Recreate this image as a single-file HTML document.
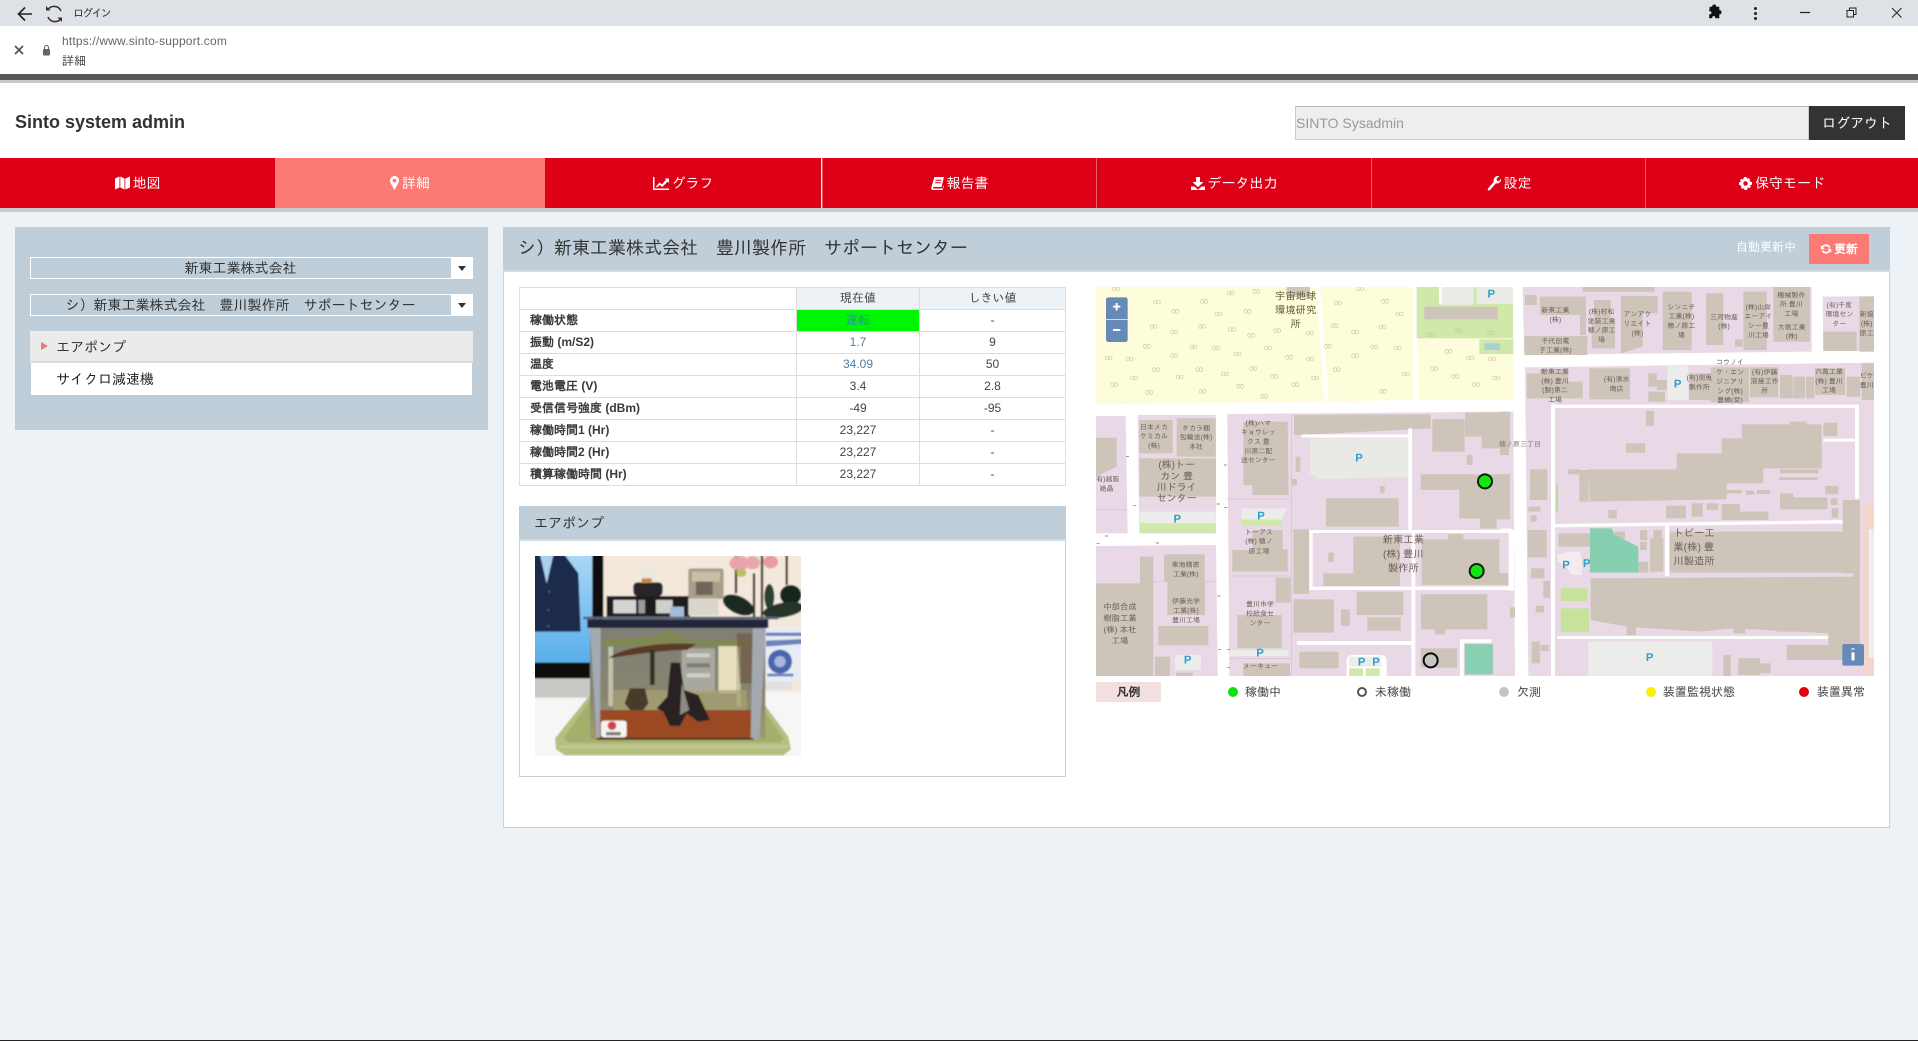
<!DOCTYPE html>
<html lang="ja"><head><meta charset="utf-8"><title>詳細</title>
<style>
html,body{margin:0;padding:0;width:1918px;height:1041px;overflow:hidden;background:#ecf2f6}
body{position:relative;font-family:"Liberation Sans","IPAGothic","Noto Sans CJK JP",sans-serif;color:#333;font-size:14px}
.a{position:absolute;box-sizing:border-box}
.nav{position:absolute;top:158px;height:50px;display:flex;align-items:center;justify-content:center;color:#fff;font-size:14px;gap:3px;background:#dd0016;border-left:1px solid #ea5a66;box-sizing:border-box;white-space:nowrap}
.nav svg{display:block}
.sel{position:absolute;box-sizing:border-box;left:30px;width:443px;height:22px;border:1px solid #fff;background:#bfced8;text-align:center;line-height:20px;padding-right:22px;color:#333;white-space:nowrap}
.sel:after{content:"";position:absolute;right:0;top:0;width:21px;height:20px;background:#fff}
.sel i{position:absolute;z-index:2;right:6px;top:8px;width:0;height:0;border-left:4px solid transparent;border-right:4px solid transparent;border-top:5px solid #333}
table{position:absolute;left:519px;top:287px;width:546px;height:199px;border-collapse:collapse;table-layout:fixed;font-size:12px;background:#fff}
td,th{border:1px solid #ddd;height:19px;padding:0 0 2px;text-align:center;font-weight:normal;color:#444;line-height:14px}
th{background:#ecf2f6}
td.l{text-align:left;padding-left:10px;font-weight:bold;color:#3a3a3a}
.leg{position:absolute;top:685px;font-size:12px;line-height:14px;color:#444;white-space:nowrap}
.dot{position:absolute;top:687px;width:10px;height:10px;border-radius:50%}
svg text{font-family:"Liberation Sans","IPAGothic","Noto Sans CJK JP",sans-serif}
</style></head><body>

<!-- browser chrome -->
<div class="a" style="left:0;top:0;width:1918px;height:26px;background:#dee1e6"></div>
<div class="a" style="left:0;top:26px;width:1918px;height:48px;background:#fff"></div>
<div class="a" style="left:0;top:74px;width:1918px;height:6px;background:#5a5857"></div>
<div class="a" style="left:0;top:80px;width:1918px;height:3px;background:#c9c9c9"></div>
<svg class="a" style="left:0;top:0" width="130" height="70" viewBox="0 0 130 70" fill="none">
<path d="M32 14H19M25 7.500L18.500 14L25 20.500" stroke="#222" stroke-width="1.600"/>
<path d="M61 11a7.500 7.500 0 0 0-13-1.500M48 17a7.500 7.500 0 0 0 13 1.500" stroke="#333" stroke-width="1.600"/>
<path d="M46 6v4.500h4.500zM62 22v-4.500h-4.500z" fill="#333"/>
<path d="M15 46l8 8M23 46l-8 8" stroke="#555" stroke-width="1.800"/>
<rect x="43" y="49" width="7" height="6.500" rx="1" fill="#666"/>
<path d="M44.500 49v-1.500a2 2 0 0 1 4 0V49" stroke="#666" stroke-width="1.100"/>
</svg>
<div class="a" style="left:73px;top:8px;font-size:11px;line-height:12px;color:#333;letter-spacing:-1.800px">ログイン</div>
<div class="a" style="left:62px;top:34px;font-size:12px;line-height:14px;color:#666;letter-spacing:.17px">https://www.sinto-support.com</div>
<div class="a" style="left:62px;top:54px;font-size:12px;line-height:14px;color:#444">詳細</div>
<svg class="a" style="left:1700px;top:0" width="218" height="26" viewBox="1700 0 218 26" fill="none">
<path d="M1711 8h2.500c-.5-3 4-3 3.500 0h3v3.500c3-.5 3 4 0 3.500v4h-3.500c.5-3-4-3-3.500 0h-2.500v-3.500c3 .5 3-4 0-3.500z" fill="#111" stroke="#111" stroke-width=".6" transform="translate(-1 -1)"/>
<circle cx="1755.500" cy="8.500" r="1.500" fill="#222"/><circle cx="1755.500" cy="13.500" r="1.500" fill="#222"/><circle cx="1755.500" cy="18.500" r="1.500" fill="#222"/>
<path d="M1800 12.500h10" stroke="#222" stroke-width="1.200"/>
<path d="M1847 10.500h6.500v6.500h-6.500zM1849.500 10.500v-2.500h6.500v6.500h-2.500" stroke="#222" stroke-width="1"/>
<path d="M1892 8l9.500 9.500M1901.500 8l-9.500 9.500" stroke="#222" stroke-width="1"/>
</svg>

<!-- page header -->
<div class="a" style="left:0;top:83px;width:1918px;height:75px;background:#fff"></div>
<div class="a" style="left:15px;top:112px;font-size:18px;line-height:21px;font-weight:bold;color:#333;white-space:nowrap">Sinto system admin</div>
<div class="a" style="left:1295px;top:106px;width:514px;height:34px;background:#eee;border:1px solid #ccc;border-top-color:#bbb;font-size:14px;line-height:32px;color:#999">SINTO Sysadmin</div>
<div class="a" style="left:1809px;top:106px;width:96px;height:34px;background:#333;color:#fff;font-size:14px;line-height:34px;text-align:center">ログアウト</div>

<!-- nav -->
<div class="a" style="left:0;top:208px;width:1918px;height:4px;background:#c9c9c9"></div>
<div class="nav" style="left:0;width:275px;border-left:0">
<svg width="15" height="14" viewBox="0 0 15 14"><path d="M0 2.500L4.500 .5V11.500L0 13.500zM5.300 .5L9.500 2.500V13.500L5.300 11.500zM10.300 2.500L15 .5V11.500L10.300 13.500z" fill="#fff"/></svg>地図</div>
<div class="nav" style="left:275px;width:270px;background:#fb7b74;border-left:0;color:#fff">
<svg width="9" height="14" viewBox="0 0 9 14"><path fill-rule="evenodd" d="M4.500 0a4.500 4.500 0 0 1 4.500 4.500c0 2.300-3 6.500-4.500 9.500C3 11 0 6.800 0 4.500A4.500 4.500 0 0 1 4.500 0zM4.500 2.700a1.900 1.900 0 1 0 0 3.800a1.900 1.900 0 0 0 0-3.800z" fill="#fff"/></svg>詳細</div>
<div class="nav" style="left:545px;width:276px;border-left:0">
<svg width="16" height="13" viewBox="0 0 16 13"><path d="M0 0h1.500v11.500H16V13H0zM3 9.500L6.500 5.500L9 7.500L13 2.500L11.500 1.500H16V6L14.800 4.500L9.300 10L6.700 8L4 10.500z" fill="#fff"/></svg>グラフ</div>
<div class="nav" style="left:822px;width:274px">
<svg width="13" height="13" viewBox="0 0 13 13"><path fill-rule="evenodd" d="M3.500 0H13L10.500 10H2.800C1.800 10 1.800 11.500 2.800 11.500H11.500L12.500 8.500L13 9L11.500 13H2C.5 13 0 11.500 .4 10zM4.500 2.800L4.300 3.800H10.300L10.500 2.800zM4 5.200L3.800 6.200H9.800L10 5.200z" fill="#fff"/></svg>報告書</div>
<div class="nav" style="left:1096px;width:275px">
<svg width="14" height="13" viewBox="0 0 14 13"><path d="M5 0H9V5H12.500L7 10.200L1.500 5H5zM0 9.500H3.500L7 12.800L10.500 9.500H14V13H0z" fill="#fff"/></svg>データ出力</div>
<div class="nav" style="left:1371px;width:275px">
<svg width="14" height="15" viewBox="0 0 14 15"><path d="M14 3.500C14 6.500 11.500 8 9 7.300L2.800 14.200C1.800 15.300 0 13.800 1 12.500L6.800 5.800C6 3 8 0 11 0C11.500 0 12 .1 12.300 .3L9.500 2.800L10 4.800L12 5.300L13.800 2.500C13.900 2.800 14 3.100 14 3.500z" fill="#fff"/></svg>設定</div>
<div class="nav" style="left:1645px;width:273px">
<svg width="13" height="13" viewBox="0 0 14 14"><path fill-rule="evenodd" d="M5.800 0H8.200L8.600 1.900L10.300 1.200L12 2.700L11.200 4.400L13 5L14 5.800V8.200L12.100 8.600L12.800 10.300L11.300 12L9.600 11.200L9 13L8.200 14H5.800L5.400 12.100L3.700 12.800L2 11.300L2.800 9.600L1 9L0 8.200V5.800L1.900 5.400L1.200 3.700L2.700 2L4.400 2.800L5 1zM7 4.600a2.400 2.400 0 1 0 0 4.800a2.400 2.400 0 0 0 0-4.800z" fill="#fff"/></svg>保守モード</div>

<!-- left panel -->
<div class="a" style="left:15px;top:227px;width:473px;height:203px;background:#bfced8"></div>
<div class="sel" style="top:257px">新東工業株式会社<i></i></div>
<div class="sel" style="top:294px">シ）新東工業株式会社　豊川製作所　サポートセンター<i></i></div>
<div class="a" style="left:30px;top:331px;width:443px;height:32px;background:#ebebeb;border-bottom:2px solid #dcdcdc;line-height:32px;padding-left:26px;color:#333">エアポンプ</div>
<div class="a" style="left:41px;top:342px;width:0;height:0;border-left:7px solid #e77b78;border-top:4px solid transparent;border-bottom:4px solid transparent"></div>
<div class="a" style="left:31px;top:363px;width:441px;height:32px;background:#fff;line-height:32px;padding-left:25px;color:#222">サイクロ減速機</div>

<!-- right panel -->
<div class="a" style="left:503px;top:227px;width:1387px;height:601px;background:#fff;border:1px solid #c6d2db"></div>
<div class="a" style="left:503px;top:227px;width:1387px;height:43px;background:#bfced8;border-bottom:0"></div>
<div class="a" style="left:503px;top:270px;width:1387px;height:2px;background:#d3dde4"></div>
<div class="a" style="left:518px;top:237px;font-size:18px;line-height:22px;color:#333;white-space:nowrap">シ）新東工業株式会社　豊川製作所　サポートセンター</div>
<div class="a" style="left:1736px;top:240px;font-size:12px;line-height:14px;color:#fff;white-space:nowrap">自動更新中</div>
<div class="a" style="left:1809px;top:234px;width:60px;height:30px;background:#fb7b74;color:#fff;font-size:12px;line-height:30px;padding-left:25px;font-weight:bold">更新</div>
<svg class="a" style="left:1820px;top:243px" width="12" height="12" viewBox="0 0 12 12"><path d="M10.500 4.500A4.800 4.800 0 0 0 2 3.500L.8 2.300V6.200H4.700L3.300 4.800A3 3 0 0 1 8.500 4.500zM1.500 7.500A4.800 4.800 0 0 0 10 8.500L11.200 9.700V5.800H7.300L8.700 7.200A3 3 0 0 1 3.500 7.500z" fill="#fff"/></svg>

<table>
<colgroup><col style="width:277px"><col style="width:123px"><col style="width:146px"></colgroup>
<tr><td style="background:#fff"></td><th>現在値</th><th>しきい値</th></tr>
<tr><td class="l">稼働状態</td><td style="background:#00f500;color:#1f9a9a;border:1px solid #ddd">運転</td><td>-</td></tr>
<tr><td class="l">振動 (m/S2)</td><td style="color:#4d7ea8">1.7</td><td>9</td></tr>
<tr><td class="l">温度</td><td style="color:#4d7ea8">34.09</td><td>50</td></tr>
<tr><td class="l">電池電圧 (V)</td><td>3.4</td><td>2.8</td></tr>
<tr><td class="l">受信信号強度 (dBm)</td><td>-49</td><td>-95</td></tr>
<tr><td class="l">稼働時間1 (Hr)</td><td>23,227</td><td>-</td></tr>
<tr><td class="l">稼働時間2 (Hr)</td><td>23,227</td><td>-</td></tr>
<tr><td class="l">積算稼働時間 (Hr)</td><td>23,227</td><td>-</td></tr>
</table>

<!-- air pump panel -->
<div class="a" style="left:519px;top:506px;width:547px;height:271px;background:#fff;border:1px solid #c6d2db"></div>
<div class="a" style="left:519px;top:506px;width:547px;height:33px;background:#bfced8;line-height:35px;padding-left:15px;color:#333">エアポンプ</div>
<div class="a" style="left:519px;top:539px;width:547px;height:2px;background:#d3dde4"></div>

<svg class="a" style="left:535px;top:556px" width="266" height="200" viewBox="535 556 266 200">
<defs>
<linearGradient id="sk" x1="0" y1="0" x2="0" y2="1"><stop offset="0" stop-color="#b4dcf6"/><stop offset="1" stop-color="#58aeea"/></linearGradient>
<linearGradient id="wt" x1="0" y1="0" x2="0" y2="1"><stop offset="0" stop-color="#7f7f76"/><stop offset=".6" stop-color="#87846f"/><stop offset="1" stop-color="#a29a6e"/></linearGradient>
<filter id="bl" x="-5%" y="-5%" width="110%" height="110%"><feGaussianBlur stdDeviation="2.400"/></filter>
<clipPath id="ic"><rect x="535" y="556" width="266" height="200"/></clipPath>
</defs>
<g clip-path="url(#ic)"><g transform="translate(530 550) scale(.33333)" filter="url(#bl)">
<rect x="-20" y="-20" width="880" height="680" fill="#f4e8dc"/>
<rect x="-20" y="425" width="880" height="230" fill="#f6f6f6"/>
<rect x="-20" y="-20" width="240" height="408" fill="#0e0e10"/>
<rect x="-20" y="-20" width="207" height="358" fill="url(#sk)"/>
<path d="M-20 -20H25L50 100L78 -20L145 70L152 245H-20z" fill="#1c2b4c"/>
<path d="M22 -20H78L50 100z" fill="#a9cfee"/>
<circle cx="55" cy="180" r="3" fill="#5a6a88"/><circle cx="55" cy="228" r="3" fill="#5a6a88"/><circle cx="58" cy="125" r="3" fill="#5a6a88"/>
<rect x="-20" y="385" width="220" height="58" fill="#c9c9c5"/>
<!-- tray -->
<path d="M185 428L75 565L78 598L105 616H760L783 598L775 560L690 445z" fill="#b5bf80"/>
<path d="M185 445L100 565L115 578H750L760 565L695 470z" fill="#a5af6c"/>
<path d="M85 590H775" stroke="#c4cc96" stroke-width="6"/>
<!-- rack + equipment -->
<rect x="230" y="138" width="250" height="62" fill="#1b1b1b"/>
<rect x="250" y="150" width="68" height="40" fill="#d5d5d2"/><rect x="378" y="150" width="50" height="40" fill="#cfcfcb"/><rect x="325" y="150" width="20" height="40" fill="#9a9a98"/>
<rect x="310" y="97" width="88" height="41" rx="12" fill="#27272c"/>
<rect x="333" y="60" width="40" height="30" fill="#e9e9e0"/><rect x="335" y="85" width="30" height="14" fill="#c98a3c"/>
<rect x="475" y="55" width="106" height="92" rx="8" fill="#a89e8a"/>
<rect x="486" y="65" width="84" height="30" fill="#c9bfa8"/><rect x="498" y="95" width="50" height="40" fill="#6d665a"/>
<rect x="475" y="145" width="90" height="50" fill="#dad6cc"/>
<rect x="420" y="170" width="42" height="36" fill="#a5bdd9"/>
<!-- plant -->
<path d="M618 -20V130M672 70V205M696 -20V205M770 -20V105" stroke="#3b3020" stroke-width="7" fill="none"/>
<ellipse cx="628" cy="40" rx="30" ry="22" fill="#e9a3ac"/><ellipse cx="668" cy="38" rx="22" ry="20" fill="#e7a9a8"/><ellipse cx="722" cy="36" rx="22" ry="19" fill="#e89aa5"/>
<ellipse cx="634" cy="68" rx="15" ry="13" fill="#b9c264"/>
<ellipse cx="625" cy="165" rx="50" ry="26" transform="rotate(25 625 165)" fill="#1f2c23"/>
<ellipse cx="782" cy="135" rx="32" ry="30" fill="#18281c"/><ellipse cx="718" cy="140" rx="15" ry="38" fill="#2a4030"/>
<ellipse cx="760" cy="180" rx="62" ry="22" transform="rotate(-10 760 180)" fill="#26352a"/>
<!-- vase -->
<path d="M700 232H860V350L785 395H712z" fill="#e8ecf4"/>
<path d="M708 248H860V258H708zM708 272L860 265V278L708 290z" fill="#6a84bc"/>
<circle cx="750" cy="335" r="36" fill="#4a66ac"/><circle cx="750" cy="335" r="17" fill="#a8b8dc"/>
<path d="M712 375H790" stroke="#6a84bc" stroke-width="8"/>
<rect x="696" y="395" width="90" height="25" rx="8" fill="#dfe0e2"/>
<!-- tank -->
<rect x="180" y="232" width="526" height="336" fill="url(#wt)"/>
<rect x="565" y="280" width="55" height="150" fill="#e6dfbe"/>
<rect x="455" y="295" width="100" height="135" fill="#a8a8a0"/>
<rect x="470" y="310" width="70" height="12" fill="#cfcfc8"/><rect x="470" y="340" width="70" height="12" fill="#7d7d78"/><rect x="470" y="370" width="70" height="12" fill="#cfcfc8"/>
<rect x="235" y="290" width="14" height="178" fill="#c4c2aa"/><rect x="620" y="290" width="12" height="180" fill="#c8c4a6"/>
<rect x="250" y="420" width="400" height="60" fill="#a6a272" opacity=".7"/>
<path d="M205 480H668V565H205z" fill="#9a4a24"/>
<path d="M195 270L360 262L420 240L490 270L680 272V288L195 290z" fill="#7f8852"/>
<path d="M235 325C270 295 380 275 500 282L470 300C400 300 300 315 235 325z" fill="#5b3a26"/>
<path d="M620 250H690V400H630z" fill="#6b4a38" opacity=".55"/>
<rect x="360" y="300" width="14" height="105" fill="#333028"/>
<path d="M284 460L300 415L345 415L355 460L340 480H300z" fill="#4a3a2a"/>
<path d="M380 475L412 440L422 338H450L462 420L505 435L540 510L505 515L470 490L450 528H420L400 485z" fill="#2b2420"/>
<path d="M455 400L478 480L450 495z" fill="#8d8b84"/>
<path d="M180 232H212L210 568H200z" fill="#a4aab2"/><path d="M668 235H708L688 568H662z" fill="#a4a9b0"/>
<rect x="172" y="208" width="543" height="26" fill="#24253a"/>
<rect x="160" y="200" width="585" height="8" fill="#5d6278"/>
<rect x="200" y="564" width="470" height="5" fill="#2a241e"/>
<!-- label -->
<rect x="213" y="512" width="77" height="50" rx="8" fill="#f6f4f0"/>
<circle cx="246" cy="527" r="13" fill="#cf4248"/>
<rect x="228" y="546" width="44" height="10" fill="#444" opacity=".7"/>
</g></g>
</svg>

<!-- map -->
<svg class="a" style="left:1096px;top:287px" width="778" height="389" viewBox="1096 287 778 389" text-rendering="geometricPrecision">
<rect x="1096" y="287" width="778" height="389" fill="#fff"/>

<!-- ZONE A -->
<g transform="translate(1090 280) scale(.33333)">
<g fill="#fefddb">
<path d="M18 21H680L703 365L18 373z"/><path d="M690 21H968L970 360L717 364z"/><path d="M982 175H1269L1270 358L985 360z"/>
</g>
<path d="M980 21H1269V175H980z" fill="#d0e9a9"/>
<path d="M1055 21V75H1150V21zM1160 21H1269V72H1160z" fill="#eaeae6"/><path d="M1047 21h8v50h-8z" fill="#fff"/>
<rect x="1003" y="80" width="220" height="38" fill="#cdc4ba"/>
<rect x="1168" y="178" width="102" height="44" fill="#d0e9a9"/><rect x="1183" y="190" width="47" height="20" fill="#a8cfd8"/>
<rect x="590" y="21" width="70" height="30" fill="#cdc4ba"/>
<path fill="none" stroke="#c3c596" stroke-width="1.700" d="M73 33a5 6 0 1 1 .1 0m11 0a5 6 0 1 1 .1 0M195 72a5 6 0 1 1 .1 0m11 0a5 6 0 1 1 .1 0M337 70a5 6 0 1 1 .1 0m11 0a5 6 0 1 1 .1 0M250 100a5 6 0 1 1 .1 0m11 0a5 6 0 1 1 .1 0M380 108a5 6 0 1 1 .1 0m11 0a5 6 0 1 1 .1 0M467 100a5 6 0 1 1 .1 0m11 0a5 6 0 1 1 .1 0M416 45a5 6 0 1 1 .1 0m11 0a5 6 0 1 1 .1 0M493 40a5 6 0 1 1 .1 0m11 0a5 6 0 1 1 .1 0M185 145a5 6 0 1 1 .1 0m11 0a5 6 0 1 1 .1 0M247 162a5 6 0 1 1 .1 0m11 0a5 6 0 1 1 .1 0M420 155a5 6 0 1 1 .1 0m11 0a5 6 0 1 1 .1 0M478 172a5 6 0 1 1 .1 0m11 0a5 6 0 1 1 .1 0M330 145a5 6 0 1 1 .1 0m11 0a5 6 0 1 1 .1 0M556 158a5 6 0 1 1 .1 0m11 0a5 6 0 1 1 .1 0M654 165a5 6 0 1 1 .1 0m11 0a5 6 0 1 1 .1 0M165 205a5 6 0 1 1 .1 0m11 0a5 6 0 1 1 .1 0M50 240a5 6 0 1 1 .1 0m11 0a5 6 0 1 1 .1 0M113 243a5 6 0 1 1 .1 0m11 0a5 6 0 1 1 .1 0M247 233a5 6 0 1 1 .1 0m11 0a5 6 0 1 1 .1 0M305 207a5 6 0 1 1 .1 0m11 0a5 6 0 1 1 .1 0M372 210a5 6 0 1 1 .1 0m11 0a5 6 0 1 1 .1 0M437 228a5 6 0 1 1 .1 0m11 0a5 6 0 1 1 .1 0M528 210a5 6 0 1 1 .1 0m11 0a5 6 0 1 1 .1 0M592 238a5 6 0 1 1 .1 0m11 0a5 6 0 1 1 .1 0M655 243a5 6 0 1 1 .1 0m11 0a5 6 0 1 1 .1 0M193 275a5 6 0 1 1 .1 0m11 0a5 6 0 1 1 .1 0M322 275a5 6 0 1 1 .1 0m11 0a5 6 0 1 1 .1 0M263 297a5 6 0 1 1 .1 0m11 0a5 6 0 1 1 .1 0M400 288a5 6 0 1 1 .1 0m11 0a5 6 0 1 1 .1 0M484 272a5 6 0 1 1 .1 0m11 0a5 6 0 1 1 .1 0M547 295a5 6 0 1 1 .1 0m11 0a5 6 0 1 1 .1 0M127 300a5 6 0 1 1 .1 0m11 0a5 6 0 1 1 .1 0M67 320a5 6 0 1 1 .1 0m11 0a5 6 0 1 1 .1 0M172 343a5 6 0 1 1 .1 0m11 0a5 6 0 1 1 .1 0M332 340a5 6 0 1 1 .1 0m11 0a5 6 0 1 1 .1 0M445 325a5 6 0 1 1 .1 0m11 0a5 6 0 1 1 .1 0M610 320a5 6 0 1 1 .1 0m11 0a5 6 0 1 1 .1 0M670 300a5 6 0 1 1 .1 0m11 0a5 6 0 1 1 .1 0M517 355a5 6 0 1 1 .1 0m11 0a5 6 0 1 1 .1 0M738 75a5 6 0 1 1 .1 0m11 0a5 6 0 1 1 .1 0M880 70a5 6 0 1 1 .1 0m11 0a5 6 0 1 1 .1 0M805 32a5 6 0 1 1 .1 0m11 0a5 6 0 1 1 .1 0M923 108a5 6 0 1 1 .1 0m11 0a5 6 0 1 1 .1 0M872 147a5 6 0 1 1 .1 0m11 0a5 6 0 1 1 .1 0M728 143a5 6 0 1 1 .1 0m11 0a5 6 0 1 1 .1 0M790 162a5 6 0 1 1 .1 0m11 0a5 6 0 1 1 .1 0M708 205a5 6 0 1 1 .1 0m11 0a5 6 0 1 1 .1 0M790 233a5 6 0 1 1 .1 0m11 0a5 6 0 1 1 .1 0M847 207a5 6 0 1 1 .1 0m11 0a5 6 0 1 1 .1 0M917 210a5 6 0 1 1 .1 0m11 0a5 6 0 1 1 .1 0M735 275a5 6 0 1 1 .1 0m11 0a5 6 0 1 1 .1 0M873 340a5 6 0 1 1 .1 0m11 0a5 6 0 1 1 .1 0M942 288a5 6 0 1 1 .1 0m11 0a5 6 0 1 1 .1 0M1070 220a5 6 0 1 1 .1 0m11 0a5 6 0 1 1 .1 0M1135 240a5 6 0 1 1 .1 0m11 0a5 6 0 1 1 .1 0M1200 243a5 6 0 1 1 .1 0m11 0a5 6 0 1 1 .1 0M1027 272a5 6 0 1 1 .1 0m11 0a5 6 0 1 1 .1 0M1090 295a5 6 0 1 1 .1 0m11 0a5 6 0 1 1 .1 0M1213 300a5 6 0 1 1 .1 0m11 0a5 6 0 1 1 .1 0M1153 320a5 6 0 1 1 .1 0m11 0a5 6 0 1 1 .1 0M1016 170a5 6 0 1 1 .1 0m11 0a5 6 0 1 1 .1 0M1100 158a5 6 0 1 1 .1 0m11 0a5 6 0 1 1 .1 0M1197 165a5 6 0 1 1 .1 0m11 0a5 6 0 1 1 .1 0"/>

<!-- pink land -->
<g fill="#e9d9e6">
<path d="M18 408H107L113 760H18z"/>
<path d="M143 405H378V760H148z"/>
<path d="M412 402L1270 395L1275 1188H418z"/>
<path d="M18 798L378 795L383 1188H18z"/>
</g>
<!-- buildings -->
<g fill="#cdc4ba">
<path d="M18 473H80V560L18 590z"/>
<rect x="148" y="420" width="100" height="100"/><rect x="260" y="415" width="117" height="115"/>
<path d="M148 535H378V650H148z"/>
<path d="M460 425H593L596 645H487V615H460z"/>
<path d="M612 405L1022 403V445L635 465H612z"/>
<rect x="1027" y="417" width="97" height="98"/>
<path d="M1125 397H1260V505H1175V470H1125z"/>
<rect x="1130" y="525" width="18" height="30"/><rect x="617" y="530" width="14" height="45"/><rect x="605" y="597" width="16" height="20"/><rect x="870" y="618" width="14" height="22"/>
<rect x="708" y="655" width="218" height="85"/>
<path d="M992 583H1260V718H1220V745H1170V715H1108V630H992z"/>
<path d="M487 750H578V808H593V875H427V810H487z"/>
<rect x="610" y="748" width="47" height="194"/>
<rect x="610" y="958" width="122" height="100"/><rect x="800" y="935" width="140" height="70"/><rect x="832" y="1012" width="100" height="40"/><rect x="753" y="988" width="26" height="50"/>
<path d="M993 943H1192V1048H1065V1063H1035V1048H993z"/>
<path d="M442 1005H575V1105H442z"/><rect x="557" y="893" width="45" height="75"/>
<rect x="460" y="1150" width="140" height="38"/><rect x="628" y="1115" width="118" height="50"/>
<rect x="992" y="1105" width="110" height="58"/>
<path d="M18 910H150V830H190V1188H18z"/>
<rect x="222" y="823" width="122" height="82"/><rect x="232" y="905" width="113" height="100"/>
<rect x="205" y="1038" width="150" height="58"/><rect x="195" y="1130" width="45" height="58"/><rect x="258" y="1178" width="50" height="10"/>
</g>
<!-- roads -->
<g fill="#fff">
<rect x="658" y="750" width="612" height="9"/><rect x="658" y="750" width="10" height="180"/><rect x="658" y="920" width="612" height="10"/>
<rect x="955" y="445" width="11" height="310"/><rect x="634" y="463" width="330" height="10" rx="5"/>
<rect x="964" y="755" width="12" height="433"/><rect x="620" y="1083" width="345" height="12" rx="5"/>
<rect x="1110" y="1078" width="95" height="10"/><rect x="1110" y="1078" width="11" height="110"/>
<rect x="1258" y="750" width="14" height="182"/>
</g>
<!-- inner buildings in framed block -->
<g fill="#cdc4ba">
<path d="M790 770H930V918H700V880H790z"/>
<path d="M995 778H1075V762H1120V778H1228V880H1252V915H995z"/>
</g>
<rect x="715" y="818" width="16" height="28" fill="#cdc4ba"/>
<!-- parking / green / water -->
<path d="M660 475H955V590L690 598L660 580z" fill="#e9e9e6"/>
<rect x="150" y="695" width="227" height="35" fill="#ececea"/><rect x="150" y="730" width="227" height="28" fill="#d0e9a9"/>
<path d="M455 685H590L575 718H455z" fill="#ececea"/><rect x="455" y="720" width="120" height="18" fill="#d0e9a9"/>
<rect x="420" y="1110" width="175" height="18" fill="#ececea"/>
<rect x="255" y="1125" width="78" height="45" fill="#ececea"/>
<path d="M770 1188V1140Q770 1125 790 1125H870Q890 1125 890 1140V1188z" fill="#fff"/>
<rect x="778" y="1130" width="94" height="30" fill="#ececea"/>
<rect x="777" y="1165" width="42" height="23" fill="#d0e9a9"/><rect x="827" y="1165" width="42" height="23" fill="#d0e9a9"/>
<rect x="1125" y="1093" width="83" height="90" fill="#89cfb2" stroke="#b0bdb0"/>
<path d="M412 657H605M604 403V1188M417 888H605M417 1135H600M18 688H110M190 905H380" stroke="#d2c0cd" stroke-width="2" fill="none"/>
<!-- P -->
<g font-size="34" font-weight="bold" fill="#2e9ecb" text-anchor="middle">
<text x="807" y="545">P</text><text x="262" y="727">P</text><text x="513" y="718">P</text><text x="510" y="1130">P</text><text x="293" y="1150">P</text><text x="815" y="1156">P</text><text x="858" y="1156">P</text><text x="1204" y="52">P</text>
</g>
<!-- labels -->
<g font-size="31" fill="#5e5a32" text-anchor="middle">
<text x="617" y="59">宇宙地球</text><text x="617" y="101">環境研究</text><text x="617" y="143">所</text>
</g>
<g font-size="31" fill="#6b5f57" text-anchor="middle">
<text x="940" y="789">新東工業</text><text x="940" y="833">(株) 豊川</text><text x="940" y="875">製作所</text>
</g>
<g font-size="30" fill="#6b5f57" text-anchor="middle">
<text x="260" y="564">(株)トー</text><text x="260" y="598">カン 豊</text><text x="260" y="631">川ドライ</text><text x="260" y="665">センター</text>
</g>
<g font-size="25" fill="#6b5f57" text-anchor="middle">
<text x="90" y="989">中部合成</text><text x="90" y="1023">樹脂工業</text><text x="90" y="1057">(株) 本社</text><text x="90" y="1090">工場</text>
</g>
<g font-size="21" fill="#6b5f57" text-anchor="middle">
<text x="192" y="449">日本メカ</text><text x="192" y="476">ケミカル</text><text x="192" y="504">(株)</text>
<text x="318" y="451">タカラ梱</text><text x="318" y="479">包輸送(株)</text><text x="318" y="507">本社</text>
<text x="505" y="436">(株)ハマ</text><text x="505" y="464">キョウレッ</text><text x="505" y="492">クス 豊</text><text x="505" y="520">川第二配</text><text x="505" y="547">送センター</text>
<text x="507" y="763">トーアス</text><text x="507" y="791">(株) 穂ノ</text><text x="507" y="820">原工場</text>
<text x="287" y="861">東海精密</text><text x="287" y="890">工業(株)</text>
<text x="288" y="971">伊藤光学</text><text x="288" y="999">工業(株)</text><text x="288" y="1027">豊川工場</text>
<text x="510" y="980">豊川市学</text><text x="510" y="1008">校給食セ</text><text x="510" y="1036">ンター</text>
<text x="512" y="1165">メーキュー</text>
<text x="50" y="604">(有)越阪</text><text x="50" y="633">絶晶</text>
</g>
<g stroke="#666" stroke-width="2" fill="none"><path d="M108 530h9M402 555h8M130 676h9M380 672h9M403 682h9M45 768h9M20 790h9M198 789h9M382 948h9M385 1108h8M412 1108h8M412 1163h8"/></g>
<!-- zoom control -->
<rect x="48" y="52" width="65" height="134" rx="7" fill="#6689b8"/>
<rect x="48" y="117" width="65" height="3" fill="#cfdbe8"/>
<path d="M69 80h22M80 69v22M69 150h22" stroke="#fff" stroke-width="6"/>
<!-- pins -->
<circle cx="1185" cy="604" r="21" fill="#14e614" stroke="#0c200c" stroke-width="6"/>
<circle cx="1160" cy="873" r="21" fill="#14e614" stroke="#0c200c" stroke-width="6"/>
<circle cx="1022" cy="1141" r="21" fill="#c6c6c6" stroke="#0a0a0a" stroke-width="6"/>
</g>

<!-- ZONE B -->
<g transform="translate(1500 280) scale(.33333)">
<g fill="#e9d9e6">
<path d="M68 21H935V215L73 225z"/>
<path d="M968 50L1122 48V213L970 213z"/>
<path d="M75 262L1122 248V1188H85z"/>
</g>
<g fill="#cdc4ba">
<rect x="75" y="45" width="35" height="30"/>
<path d="M120 50H258V165H240V105H120z"/>
<rect x="73" y="168" width="189" height="57"/>
<rect x="282" y="60" width="50" height="70"/><rect x="275" y="130" width="70" height="75"/>
<path d="M363 48H473V100H428V200L363 220z"/>
<rect x="488" y="35" width="87" height="175"/><rect x="618" y="40" width="52" height="155"/>
<rect x="730" y="35" width="70" height="175"/>
<rect x="820" y="21" width="110" height="164"/>
<rect x="705" y="178" width="22" height="22"/>
<rect x="970" y="155" width="100" height="58"/><rect x="1078" y="50" width="44" height="165"/>
<rect x="248" y="21" width="215" height="14"/>
<path d="M80 280H120V268H205V305H248V355H80z"/>
<rect x="268" y="265" width="122" height="93"/>
<rect x="445" y="280" width="25" height="40"/><rect x="445" y="335" width="50" height="30"/><rect x="470" y="300" width="30" height="30"/>
<rect x="567" y="280" width="65" height="80"/><rect x="632" y="262" width="115" height="105"/>
<rect x="750" y="262" width="85" height="90"/><rect x="840" y="285" width="38" height="70"/><rect x="880" y="290" width="35" height="65"/><rect x="918" y="290" width="25" height="65"/>
<rect x="945" y="265" width="90" height="80"/><rect x="1040" y="290" width="40" height="60"/><rect x="1085" y="250" width="37" height="110"/>
</g>
<rect x="503" y="258" width="62" height="102" fill="#ececea"/>
<!-- roads -->
<g fill="#fff">
<rect x="153" y="374" width="920" height="10"/><rect x="153" y="372" width="12" height="816"/>
<rect x="1065" y="374" width="12" height="282"/><rect x="970" y="476" width="95" height="9"/>
<path d="M165 732L1045 720V730L165 742z"/><rect x="495" y="738" width="12" height="150"/>
<rect x="172" y="1068" width="815" height="9"/>
</g>
<g fill="#cdc4ba">
<path d="M265 568H530V520H665V475H725V433H870V425H920V433H965V565H790V610H680V658L270 665z"/>
<rect x="238" y="570" width="28" height="95"/><rect x="378" y="490" width="57" height="28"/><rect x="205" y="568" width="35" height="15"/><rect x="438" y="393" width="24" height="45"/>
<rect x="970" y="428" width="42" height="40"/><rect x="840" y="568" width="115" height="12"/><rect x="838" y="592" width="115" height="8"/>
<path d="M840 640H880V652H983V688H840z"/>
<rect x="975" y="618" width="40" height="25"/><rect x="992" y="655" width="20" height="20"/><rect x="995" y="685" width="20" height="28"/>
<rect x="498" y="677" width="60" height="38"/><rect x="575" y="670" width="33" height="40"/><rect x="620" y="670" width="35" height="20"/>
<path d="M665 672H720V695H805V720H665z"/>
<rect x="325" y="690" width="25" height="25"/><rect x="680" y="630" width="45" height="10"/><rect x="738" y="632" width="25" height="12"/><rect x="770" y="630" width="40" height="12"/>
<path d="M510 755H1030V660H1078L1080 1140H860V1095H985V1060L700 1045L600 1055L380 1040L272 1020V895L1060 890V878H510z"/>
<rect x="1028" y="660" width="52" height="220"/>
<rect x="175" y="760" width="95" height="40"/><rect x="450" y="775" width="40" height="100"/><rect x="415" y="845" width="30" height="33"/><rect x="420" y="750" width="22" height="30"/><rect x="420" y="785" width="20" height="25"/><rect x="460" y="750" width="25" height="25"/>
<rect x="90" y="568" width="52" height="92"/><path d="M83 750H140V832H83z"/><rect x="93" y="865" width="40" height="30"/><rect x="130" y="903" width="20" height="50"/><rect x="107" y="977" width="25" height="20"/><rect x="85" y="680" width="36" height="15"/><rect x="92" y="705" width="18" height="20"/>
<rect x="30" y="982" width="15" height="30"/>
<rect x="0" y="395" width="27" height="130"/><rect x="0" y="585" width="30" height="130"/><rect x="0" y="880" width="25" height="35"/>
<rect x="95" y="1085" width="25" height="65"/><rect x="122" y="1095" width="25" height="18"/>
<rect x="670" y="1125" width="22" height="63"/><rect x="715" y="1135" width="65" height="50"/><rect x="780" y="1150" width="32" height="30"/>
<rect x="380" y="1040" width="28" height="25"/><rect x="700" y="1040" width="36" height="20"/><rect x="830" y="1010" width="50" height="45"/>
<rect x="345" y="755" width="30" height="22"/>
</g>
<path d="M270 745H335L345 765L415 800V878H270z" fill="#87cfb1"/>
<rect x="182" y="925" width="80" height="38" fill="#c7e39b"/><rect x="182" y="985" width="85" height="72" fill="#c7e39b"/>
<rect x="265" y="1085" width="372" height="103" fill="#ececea"/>
<path d="M172 825Q205 812 240 815Q250 840 245 885H215Q205 860 172 845z" fill="#f2ecf0"/>
<rect x="168" y="615" width="6" height="80" fill="#bdd8a0"/>
<rect x="1088" y="675" width="34" height="513" fill="#f2d6cc"/>
<path d="M1105 745H1122V1135H1105z" fill="#f4efe6" stroke="#ccc" stroke-width="1"/>
<!-- white frame right part -->
<rect x="0" y="746" width="36" height="10" fill="#fff"/><rect x="26" y="746" width="10" height="184" fill="#fff"/><rect x="0" y="920" width="36" height="10" fill="#fff"/>
<g font-size="34" font-weight="bold" fill="#2e9ecb" text-anchor="middle">
<text x="533" y="323">P</text><text x="198" y="866">P</text><text x="260" y="861">P</text><text x="449" y="1143">P</text>
</g>
<g font-size="21" fill="#6b5f57" text-anchor="middle">
<text x="166" y="98">新東工業</text><text x="166" y="126">(株)</text><text x="166" y="190">千代田電</text><text x="166" y="218">子工業(株)</text>
<text x="305" y="102">(株)村松</text><text x="305" y="130">塗装工業</text><text x="305" y="158">穂ノ原工</text><text x="305" y="186">場</text>
<text x="412" y="110">アンアク</text><text x="412" y="138">リエイト</text><text x="412" y="166">(株)</text>
<text x="544" y="88">シンニチ</text><text x="544" y="116">工業(株)</text><text x="544" y="144">穂ノ原工</text><text x="544" y="172">場</text>
<text x="672" y="118">三河物産</text><text x="672" y="146">(株)</text>
<text x="775" y="88">(株)山岸</text><text x="775" y="116">エーアイ</text><text x="775" y="144">シー豊</text><text x="775" y="172">川工場</text>
<text x="874" y="52">機械製作</text><text x="874" y="80">所 豊川</text><text x="874" y="108">工場</text><text x="875" y="148">大信工業</text><text x="875" y="176">(株)</text>
<text x="1018" y="82">(有)千度</text><text x="1018" y="110">環境セン</text><text x="1018" y="138">ター</text><text x="1100" y="110">新協</text><text x="1100" y="138">(株)</text><text x="1100" y="166">原工</text>
<text x="165" y="282">新東工業</text><text x="165" y="310">(株) 豊川</text><text x="165" y="338">(製)第二</text><text x="165" y="366">工場</text>
<text x="350" y="305">(有)清水</text><text x="350" y="333">商店</text>
<text x="598" y="300">(有)羽兎</text><text x="598" y="328">製作所</text>
<text x="690" y="254">コウノイ</text><text x="690" y="284">ケ・エン</text><text x="690" y="312">ジニアリ</text><text x="690" y="340">ング(株)</text><text x="690" y="368">豊橋(営)</text>
<text x="794" y="283">(有)伊藤</text><text x="794" y="311">溶接工作</text><text x="794" y="339">所</text>
<text x="987" y="282">六萬工業</text><text x="987" y="310">(株) 豊川</text><text x="987" y="338">工場</text>
<text x="1100" y="294">ビケ</text><text x="1100" y="322">豊川</text>
<text x="60" y="500" fill="#777">穂ノ原三丁目</text>
</g>
<g font-size="31" fill="#6b5f57">
<text x="520" y="770">トビー工</text><text x="520" y="812">業(株) 豊</text><text x="520" y="854">川製造所</text>
</g>
<!-- info button -->
<rect x="1027" y="1092" width="65" height="65" rx="6" fill="#6689b8"/>
<path d="M1059 1105v4M1059 1117v24" stroke="#fff" stroke-width="9"/>
</g>
</svg>

<!-- legend -->
<div class="a" style="left:1096px;top:682px;width:65px;height:20px;background:#f3dfe0;text-align:center;font-size:12px;line-height:20px;color:#333;font-weight:bold">凡例</div>
<div class="dot" style="left:1228px;background:#10e010"></div><div class="leg" style="left:1245px">稼働中</div>
<div class="dot" style="left:1357px;background:#fff;border:2px solid #555;box-sizing:border-box"></div><div class="leg" style="left:1375px">未稼働</div>
<div class="dot" style="left:1499px;background:#c4c4c4"></div><div class="leg" style="left:1517px">欠測</div>
<div class="dot" style="left:1646px;background:#f8f000"></div><div class="leg" style="left:1663px">装置監視状態</div>
<div class="dot" style="left:1799px;background:#e00010"></div><div class="leg" style="left:1817px">装置異常</div>

<div class="a" style="left:0;top:1040px;width:1918px;height:1px;background:#222"></div>
</body></html>
